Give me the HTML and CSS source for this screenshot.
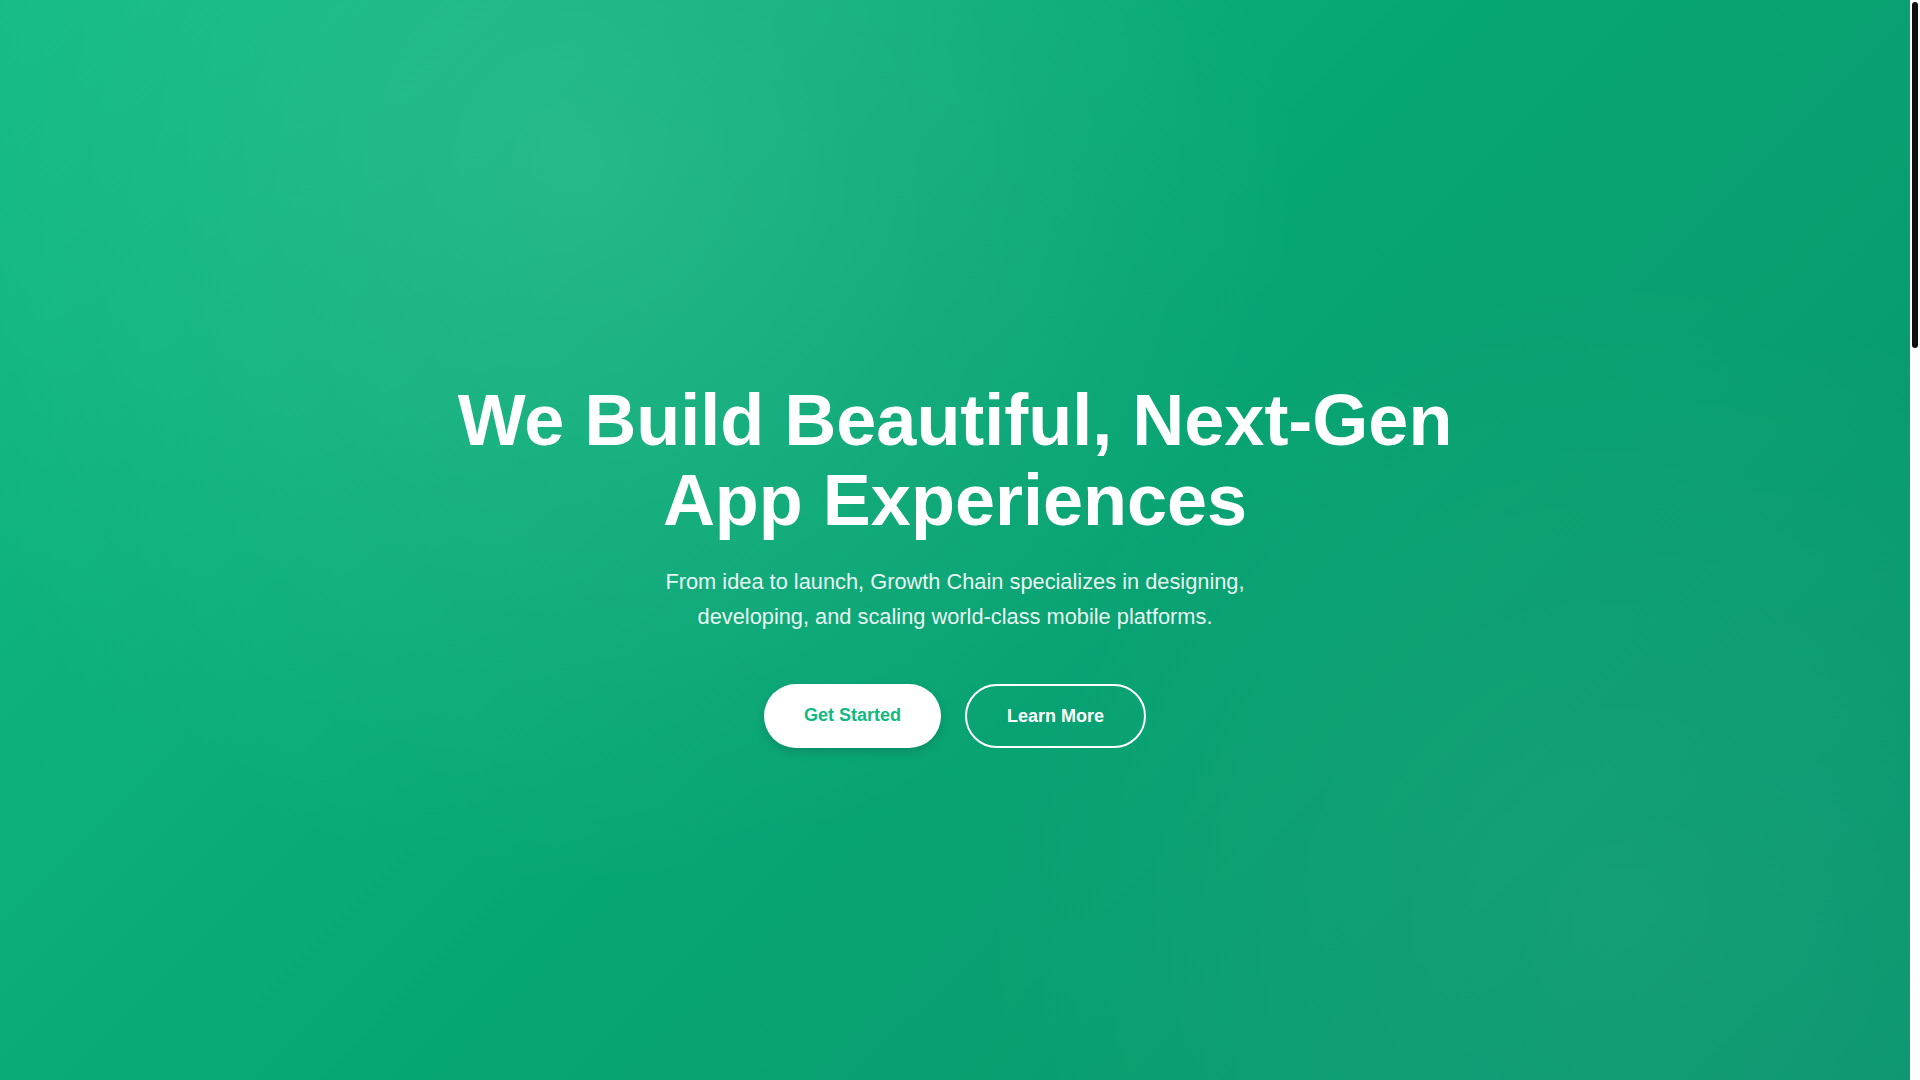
FILE: index.html
```html
<!DOCTYPE html>
<html lang="en">
<head>
<meta charset="utf-8">
<title>Growth Chain</title>
<link rel="stylesheet" href="styles.css">
</head>
<body>
<main class="page">
  <section class="hero">
    <div class="hero-content">
      <h1 class="hero-title">We Build Beautiful, Next-Gen App Experiences</h1>
      <p class="hero-text">From idea to launch, Growth Chain specializes in designing, developing, and scaling world-class mobile platforms.</p>
      <div class="hero-actions">
        <a class="btn btn-primary" href="#">Get Started</a>
        <a class="btn btn-outline" href="#">Learn More</a>
      </div>
    </div>
  </section>
  <section class="below"></section>
</main>
<div class="scrollbar" aria-hidden="true"><div class="scrollbar-thumb"></div></div>
</body>
</html>
```
FILE: styles.css
```css
* { box-sizing: border-box; }
html, body { margin: 0; padding: 0; }
html { scrollbar-width: none; }
::-webkit-scrollbar { width: 0; height: 0; }
body {
  font-family: "Liberation Sans", Arial, sans-serif;
  background: #ffffff;
}
.page {
  margin-right: 10px;
}
.scrollbar {
  position: fixed;
  top: 0;
  right: 0;
  width: 10px;
  height: 100vh;
  background: #ffffff;
  padding: 2px 2px 0 2px;
}
.scrollbar-thumb {
  width: 6px;
  height: 346px;
  background: #111111;
  border-radius: 3px;
}
.hero {
  height: 1080px;
  display: flex;
  align-items: center;
  justify-content: center;
  padding-top: 49px;
  background:
    radial-gradient(circle at 30% 15%, rgba(255,255,255,0.10) 0%, rgba(255,255,255,0) 45%),
    radial-gradient(circle at 85% 85%, rgba(255,255,255,0.05) 0%, rgba(255,255,255,0) 35%),
    linear-gradient(135deg, #12bb84 0%, #08a574 50%, #08956d 100%);
  color: #ffffff;
  text-align: center;
}
.hero-content {
  display: flex;
  flex-direction: column;
  align-items: center;
}
.hero-title {
  margin: 0;
  font-size: 72px;
  line-height: 1.1;
  font-weight: 700;
  max-width: 1000px;
}
.hero-text {
  margin: 24px 0 49px;
  max-width: 600px;
  font-size: 21.8px;
  line-height: 35.5px;
  color: rgba(255,255,255,0.92);
}
.hero-actions {
  display: flex;
  gap: 24px;
}
.btn {
  display: inline-block;
  font-size: 18px;
  font-weight: 700;
  line-height: 22px;
  text-decoration: none;
  border-radius: 50px;
}
.btn-primary {
  background: #ffffff;
  color: #10b981;
  padding: 20px 40px 22px;
  box-shadow: 0 4px 10px rgba(0,0,0,0.15);
}
.btn-outline {
  color: #ffffff;
  border: 2px solid #ffffff;
  padding: 19px 40px;
}
.below {
  height: 2290px;
  background: #ffffff;
}
```
